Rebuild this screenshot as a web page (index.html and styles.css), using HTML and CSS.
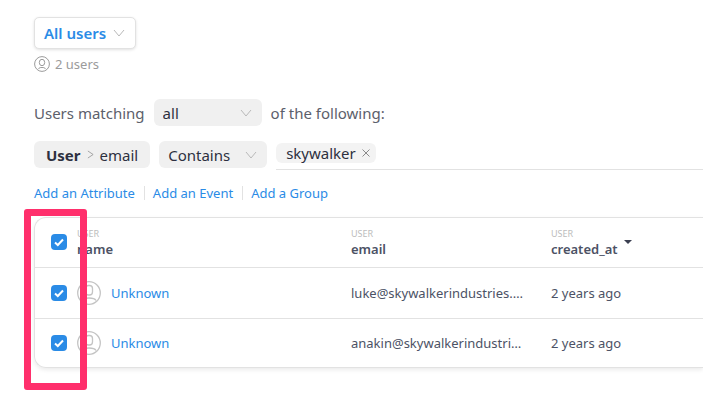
FILE: index.html
```
<!DOCTYPE html>
<html lang="en">
<head>
    <meta charset="UTF-8">
    <meta name="viewport" content="width=device-width, initial-scale=1.0">
    <title>Users</title>
    <link rel="stylesheet" href="styles.css">
</head>
<body>
    <!-- shared icons -->
    <svg class="sprite" aria-hidden="true">
        <symbol id="chevron" viewBox="0 0 12 8">
            <path d="M1 1 L6 7 L11 1" fill="none" stroke="currentColor" stroke-width="1"/>
        </symbol>
        <symbol id="person" viewBox="0 0 24 24">
            <circle cx="12" cy="12" r="11.3" fill="none" stroke="currentColor" stroke-width="1.3"/>
            <rect x="8.5" y="4.5" width="7" height="9.5" rx="3" fill="none" stroke="currentColor" stroke-width="1.3"/>
            <path d="M5 19.5 C6 17.6 8 17 12 17 C16 17 18 17.6 19 19.5" fill="none" stroke="currentColor" stroke-width="1.3"/>
        </symbol>
        <symbol id="person-small" viewBox="0 0 16 16">
            <circle cx="8" cy="8" r="7.4" fill="none" stroke="currentColor"/>
            <ellipse cx="8" cy="6.5" rx="2.7" ry="3.2" fill="none" stroke="currentColor"/>
            <path d="M4.5 13 C5.2 11.6 6.2 11.5 8 11.5 C9.8 11.5 10.8 11.6 11.5 13" fill="none" stroke="currentColor"/>
        </symbol>
    </svg>

    <main class="page">
        <button class="cohort" type="button">All users
            <svg class="chevron"><use href="#chevron"/></svg>
        </button>
        <div class="count">
            <svg class="count-icon"><use href="#person-small"/></svg>
            <span>2 users</span>
        </div>

        <div class="matching">
            <label for="match">Users matching</label>
            <div class="select">
                <select id="match">
                    <option>all</option>
                    <option>any</option>
                </select>
                <svg class="chevron"><use href="#chevron"/></svg>
            </div>
            <span>of the following:</span>
        </div>

        <div class="filter">
            <button class="property" type="button">
                <b>User</b>
                <svg class="arrow" viewBox="0 0 8 10"><path d="M1 1 L7 5 L1 9" fill="none" stroke="currentColor"/></svg>
                email
            </button>
            <div class="select">
                <select aria-label="Operator">
                    <option>Contains</option>
                    <option>Equals</option>
                </select>
                <svg class="chevron"><use href="#chevron"/></svg>
            </div>
            <div class="values">
                <span class="tag">skywalker
                    <button type="button" aria-label="Remove">
                        <svg viewBox="0 0 8 8"><path d="M0.5 0.5 L7.5 7.5 M7.5 0.5 L0.5 7.5" stroke="currentColor"/></svg>
                    </button>
                </span>
            </div>
        </div>

        <nav class="links">
            <a href="#">Add an Attribute</a>
            <a href="#">Add an Event</a>
            <a href="#">Add a Group</a>
        </nav>

        <div class="card">
            <table>
                <colgroup>
                    <col class="col-check">
                    <col class="col-name">
                    <col class="col-email">
                    <col>
                </colgroup>
                <thead>
                    <tr>
                        <th class="check"><input type="checkbox" aria-label="Select all" checked></th>
                        <th><small>USER</small>name</th>
                        <th><small>USER</small>email</th>
                        <th>
                            <div class="sorted">
                                <div><small>USER</small>created_at</div>
                                <span class="caret"></span>
                            </div>
                        </th>
                    </tr>
                </thead>
                <tbody>
                    <tr>
                        <td class="check"><input type="checkbox" aria-label="Select luke" checked></td>
                        <td><a class="user" href="#"><svg class="avatar"><use href="#person"/></svg>Unknown</a></td>
                        <td>luke@skywalkerindustries.…</td>
                        <td>2 years ago</td>
                    </tr>
                    <tr>
                        <td class="check"><input type="checkbox" aria-label="Select anakin" checked></td>
                        <td><a class="user" href="#"><svg class="avatar"><use href="#person"/></svg>Unknown</a></td>
                        <td>anakin@skywalkerindustri…</td>
                        <td>2 years ago</td>
                    </tr>
                </tbody>
            </table>
            <div class="highlight"></div>
        </div>
    </main>
</body>
</html>
```

FILE: styles.css
```
* {
    box-sizing: border-box;
}
body {
    margin: 0;
    background-color: #ffffff;
    color: #4c5265;
    font-family: "Noto Sans", sans-serif;
    font-size: 15px;
    line-height: 20px;
}
button, select {
    margin: 0;
    border: none;
    font: inherit;
    color: #2d3040;
    cursor: pointer;
}
a {
    color: #2a8be6;
    text-decoration: none;
}
.sprite {
    position: absolute;
    width: 0;
    height: 0;
}
.page {
    padding: 17px 0 24px 34px;
}
.chevron {
    width: 12px;
    height: 8px;
    color: #b9b9b9;
}

/* cohort picker */
.cohort {
    display: flex;
    align-items: center;
    gap: 7px;
    height: 32px;
    padding: 0 10px 0 9px;
    border: 1px solid #e2e2e2;
    border-radius: 5px;
    background-color: #ffffff;
    box-shadow: 0 1px 3px rgba(0, 0, 0, 0.12);
    color: #2a8be6;
    font-weight: 600;
}
.count {
    display: flex;
    align-items: center;
    gap: 5px;
    margin-top: 5px;
    color: #9b9b9b;
    font-size: 13px;
}
.count-icon {
    width: 16px;
    height: 16px;
}

/* filters */
.matching, .filter {
    display: flex;
    gap: 9px;
}
.matching {
    align-items: center;
    margin-top: 25px;
    color: #5c606b;
}
.filter {
    align-items: flex-start;
    margin-top: 15px;
}
.select {
    display: flex;
    align-items: center;
    width: 108px;
}
.select select {
    width: 100%;
    height: 27px;
    padding: 0 28px 0 9px;
    border-radius: 6px;
    background-color: #f0f0f0;
    appearance: none;
}
.select .chevron {
    flex: none;
    margin-left: -22px;
    pointer-events: none;
}
.property {
    display: flex;
    align-items: center;
    gap: 6px;
    height: 27px;
    padding: 0 12px;
    border-radius: 6px;
    background-color: #f0f0f0;
}
.arrow {
    width: 7px;
    height: 9px;
    color: #9b9b9b;
}
.values {
    flex: 1;
    height: 29px;
    padding-top: 2px;
    border-bottom: 1px solid #e2e2e2;
}
.tag {
    display: inline-flex;
    align-items: center;
    gap: 6px;
    height: 20px;
    padding: 0 6px 0 10px;
    border-radius: 6px;
    background-color: #f3f3f3;
    color: #2d3040;
    vertical-align: top;
}
.tag button {
    display: flex;
    padding: 0;
    background: none;
    color: #8a8a8a;
}
.tag svg {
    width: 8px;
    height: 8px;
}
.links {
    display: flex;
    margin-top: 16px;
    font-size: 13px;
    line-height: 14px;
}
.links a + a {
    margin-left: 9px;
    padding-left: 8px;
    border-left: 1px solid #e2e2e2;
}

/* results */
.card {
    position: relative;
    margin-top: 17px;
    border: 1px solid #e2e2e2;
    border-right: none;
    border-radius: 12px 0 0 12px;
    box-shadow: 0 2px 4px rgba(0, 0, 0, 0.08);
}
table {
    width: 100%;
    border-collapse: collapse;
    table-layout: fixed;
    font-size: 13px;
}
.col-check {
    width: 42px;
}
.col-name {
    width: 274px;
}
.col-email {
    width: 200px;
}
th, td {
    height: 51px;
    padding: 0;
    text-align: left;
    white-space: nowrap;
}
th {
    height: 49px;
    font-weight: 600;
    line-height: 16px;
}
th small {
    display: block;
    color: #bcbcbc;
    font-size: 9px;
    font-weight: 400;
    line-height: 14px;
}
tbody tr {
    border-top: 1px solid #e2e2e2;
}
tbody tr:last-child td {
    height: 49px;
}
.check {
    padding-left: 16px;
}
.check input {
    display: block;
    width: 16px;
    height: 16px;
    margin: 0;
    border-radius: 4px;
    background: #2a8be6 url("data:image/svg+xml,%3Csvg xmlns='http://www.w3.org/2000/svg' viewBox='0 0 16 16'%3E%3Cpath d='M4 8.5 L6.8 11 L12 5.5' fill='none' stroke='white' stroke-width='2'/%3E%3C/svg%3E");
    appearance: none;
}
.user {
    display: flex;
    align-items: center;
    gap: 10px;
}
.avatar {
    width: 24px;
    height: 24px;
    color: #c4c4c4;
}
.sorted {
    display: flex;
    align-items: center;
    gap: 6px;
}
.caret {
    border: 4px solid transparent;
    border-top-color: #3b3f51;
    border-bottom: none;
}
.highlight {
    position: absolute;
    top: -9px;
    left: -11px;
    width: 63px;
    height: 181px;
    border: 7px solid #ff2f6c;
    border-radius: 3px;
    pointer-events: none;
}
```
